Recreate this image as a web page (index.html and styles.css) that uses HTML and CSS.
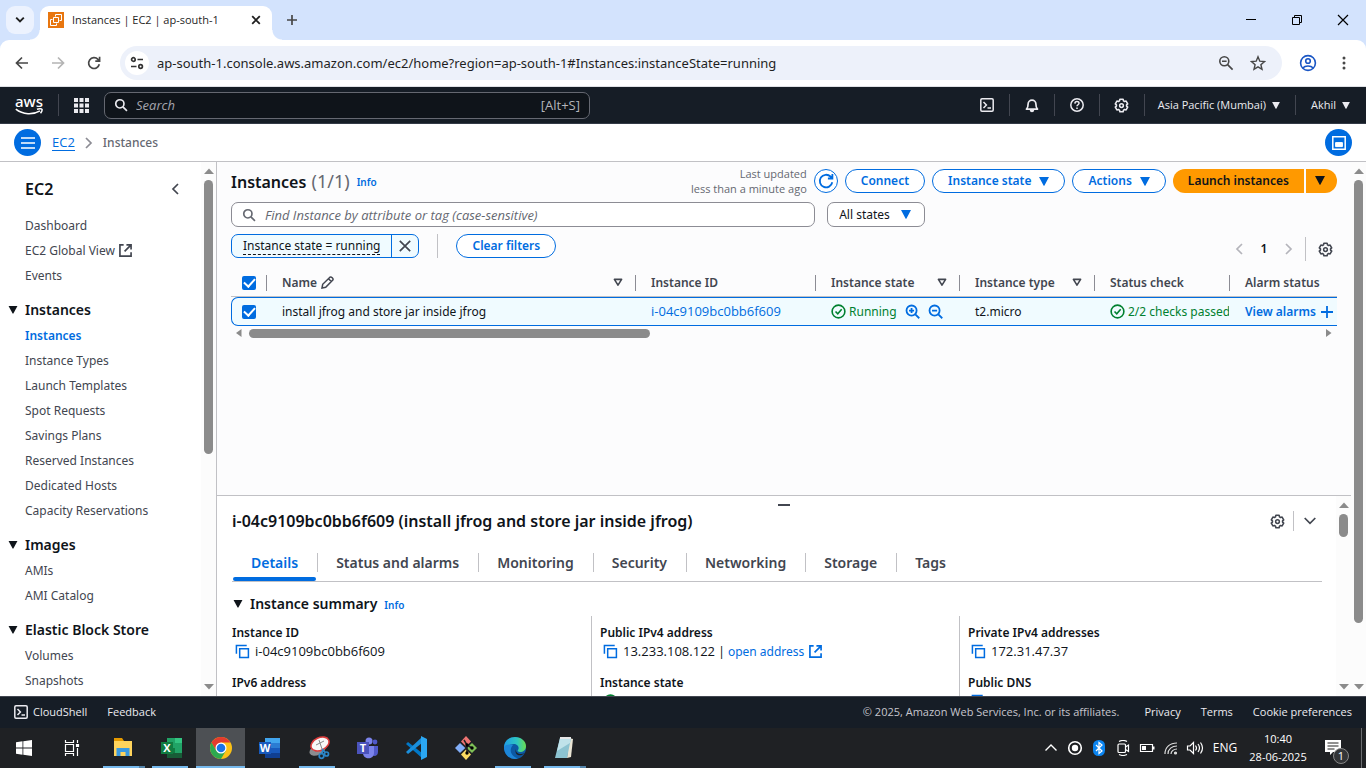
FILE: index.html
```html
<!DOCTYPE html>
<html lang="en">
<head>
<meta charset="utf-8">
<title>Instances | EC2 | ap-south-1</title>
<link rel="stylesheet" href="styles.css">
</head>
<body>
<svg class="defs" aria-hidden="true">
  <symbol id="caret" viewBox="0 0 10 9"><path d="M0 0h10L5.6 8.2a.7.7 0 0 1-1.200 0z" fill="currentColor"/></symbol>
  <symbol id="caret-open" viewBox="0 0 10 9"><path d="M1.400 1.400h7.200L5 7.200z" fill="none" stroke="currentColor" stroke-width="1.600" stroke-linejoin="round"/></symbol>
  <symbol id="gear" viewBox="0 0 16 16"><path d="M6.300 1.400h3.400l.5 1.700 1 .6 1.700-.4 1.700 2.900-1.200 1.200v1.200l1.200 1.200-1.700 2.900-1.700-.4-1 .6-.5 1.700H6.300l-.5-1.700-1-.6-1.700.4-1.700-2.900 1.200-1.200V7.400L1.400 6.200l1.700-2.900 1.700.4 1-.6z" fill="none" stroke="currentColor" stroke-width="1.700" stroke-linejoin="round"/><circle cx="8" cy="8" r="2" fill="none" stroke="currentColor" stroke-width="1.600"/></symbol>
  <symbol id="search" viewBox="0 0 16 16"><circle cx="6.700" cy="6.700" r="4.700" fill="none" stroke="currentColor" stroke-width="1.900"/><path d="M10.200 10.200l4.600 4.600" stroke="currentColor" stroke-width="1.900"/></symbol>
  <symbol id="external" viewBox="0 0 14 14"><path d="M5 1H1v12h12V9M8 1h5v5M13 1L6 8" fill="none" stroke="currentColor" stroke-width="1.800"/></symbol>
  <symbol id="copy" viewBox="0 0 16 16"><path d="M1.500 10.500v-9h11" fill="none" stroke="currentColor" stroke-width="1.600"/><path d="M5 5h9.300v9.300H5z" fill="none" stroke="currentColor" stroke-width="1.600"/></symbol>
  <symbol id="ok" viewBox="0 0 16 16"><circle cx="8" cy="8" r="6.800" fill="none" stroke="currentColor" stroke-width="1.700"/><path d="M4.800 8l2.400 2.500L11.400 5.600" fill="none" stroke="currentColor" stroke-width="1.700"/></symbol>
  <symbol id="zoom-in" viewBox="0 0 16 16"><circle cx="7" cy="7" r="5.400" fill="none" stroke="currentColor" stroke-width="1.900"/><path d="M11 11l4.200 4.200M4.300 7h5.400M7 4.300v5.400" stroke="currentColor" stroke-width="1.900"/></symbol>
  <symbol id="zoom-out" viewBox="0 0 16 16"><circle cx="7" cy="7" r="5.400" fill="none" stroke="currentColor" stroke-width="1.900"/><path d="M11 11l4.200 4.200M4.300 7h5.400" stroke="currentColor" stroke-width="1.900"/></symbol>
  <symbol id="shell" viewBox="0 0 14 14"><rect x=".8" y=".8" width="12.400" height="12.400" rx="1.200" fill="none" stroke="currentColor" stroke-width="1.500"/><path d="M3.500 4l2.900 3-2.900 3M7.500 10h3.500" fill="none" stroke="currentColor" stroke-width="1.500"/></symbol>
  <symbol id="left" viewBox="0 0 8 12"><path d="M7 1L2 6l5 5" fill="none" stroke="currentColor" stroke-width="1.700"/></symbol>
  <symbol id="right" viewBox="0 0 8 12"><path d="M1 1l5 5-5 5" fill="none" stroke="currentColor" stroke-width="1.700"/></symbol>
  <symbol id="up-tri" viewBox="0 0 10 6"><path d="M0 6l5-5.500L10 6z" fill="currentColor"/></symbol>
  <symbol id="down-tri" viewBox="0 0 10 6"><path d="M0 0h10L5 5.500z" fill="currentColor"/></symbol>
</svg>

<header class="browser">
  <div class="tabstrip">
    <button class="tab-search" aria-label="Search tabs"><svg width="10" height="8" viewBox="0 0 10 8"><path d="M1.200 1.700L5 5.500l3.800-3.800" fill="none" stroke="#1f1f1f" stroke-width="1.900"/></svg></button>
    <div class="tab">
      <svg class="favicon" width="16" height="16" viewBox="0 0 16 16"><path d="M0 0h16v16H0z" fill="#e8760f"/><g fill="none" stroke="#fff" stroke-width="1"><path d="M7.500 4.500v-2h6v6h-2M5.500 5.500h5v5h-5zM4.500 7.500h-2v6h6v-2"/></g></svg>
      <span class="tab-title">Instances | EC2 | ap-south-1</span>
      <button class="plain" aria-label="Close tab"><svg width="10" height="10" viewBox="0 0 10 10"><path d="M1.200 1.200l7.600 7.600M8.800 1.200L1.200 8.800" stroke="#1f1f1f" stroke-width="1.800"/></svg></button>
    </div>
    <button class="plain new-tab" aria-label="New tab"><svg width="12" height="12" viewBox="0 0 12 12"><path d="M6 1v10M1 6h10" stroke="#474747" stroke-width="1.700"/></svg></button>
    <div class="window-buttons">
      <button class="plain" aria-label="Minimize"><svg width="12" height="12" viewBox="0 0 12 12"><path d="M1 5.500h10" stroke="#000"/></svg></button>
      <button class="plain" aria-label="Restore"><svg width="12" height="12" viewBox="0 0 12 12"><path d="M1.500 3.500h7v7h-7zM3.500 3V1.500h7v7H9" fill="none" stroke="#000"/></svg></button>
      <button class="plain" aria-label="Close"><svg width="12" height="12" viewBox="0 0 12 12"><path d="M1 1l10 10M11 1L1 11" stroke="#000" stroke-width="1.200"/></svg></button>
    </div>
  </div>
  <div class="toolbar">
    <button class="plain tool" aria-label="Back"><svg width="14" height="14" viewBox="0 0 14 14"><path d="M13 7H2M7 1.500L1.500 7 7 12.500" fill="none" stroke="#474747" stroke-width="1.700"/></svg></button>
    <button class="plain tool" aria-label="Forward"><svg width="14" height="14" viewBox="0 0 14 14"><path d="M1 7h11M7 1.500L12.500 7 7 12.500" fill="none" stroke="#b4b4b4" stroke-width="1.700"/></svg></button>
    <button class="plain tool" aria-label="Reload"><svg width="14" height="14" viewBox="0 0 14 14"><path d="M12.300 8.300A5.400 5.400 0 1 1 11 3.400l1.400 1.400M12.600.8v4.300H8.300" fill="none" stroke="#474747" stroke-width="1.700"/></svg></button>
    <div class="omnibox">
      <span class="site-info"><svg width="14" height="14" viewBox="0 0 14 14" fill="none" stroke="#333" stroke-width="1.700"><circle cx="3.400" cy="3.500" r="1.800"/><path d="M7.500 3.500H13M1 10.500h5.500"/><circle cx="10.600" cy="10.500" r="1.800"/></svg></span>
      <input class="url" aria-label="Address" value="ap-south-1.console.aws.amazon.com/ec2/home?region=ap-south-1#Instances:instanceState=running">
      <button class="plain" aria-label="Zoom"><svg width="16" height="16" viewBox="0 0 16 16" fill="none" stroke="#474747" stroke-width="1.600"><circle cx="6.300" cy="6.300" r="4.500"/><path d="M9.600 9.600l5 5M4 6.300h4.600"/></svg></button>
      <button class="plain" aria-label="Bookmark"><svg width="16" height="16" viewBox="0 0 16 16"><path d="M8 1.800l1.800 4.400 4.700.4-3.600 3.100 1.100 4.600L8 11.800l-4 2.500 1.100-4.600L1.500 6.600l4.700-.4z" fill="none" stroke="#474747" stroke-width="1.400"/></svg></button>
    </div>
    <button class="plain profile" aria-label="Profile"><svg width="18" height="18" viewBox="0 0 18 18" fill="none" stroke="#1a56c4" stroke-width="1.600"><circle cx="9" cy="9" r="7.400"/><circle cx="9" cy="7" r="2.300"/><path d="M3.800 14c2.400-2.600 8-2.600 10.400 0"/></svg></button>
    <button class="plain" aria-label="Menu"><svg width="4" height="14" viewBox="0 0 4 14" fill="#474747"><circle cx="2" cy="2" r="1.500"/><circle cx="2" cy="7" r="1.500"/><circle cx="2" cy="12" r="1.500"/></svg></button>
  </div>
</header>

<nav class="aws-nav">
  <a class="aws-logo" href="#" aria-label="AWS home"><span>aws</span><svg width="28" height="7" viewBox="0 0 28 7" fill="none" stroke="#fff" stroke-width="1.500"><path d="M.8 1.200C8 6.800 18 7 25 2.800M22 1.300c1.500-.6 4.600-.8 5 0 .3.900-.5 2.700-1.500 4"/></svg></a>
  <button class="plain apps" aria-label="Services"><svg width="15" height="15" viewBox="0 0 15 15" fill="#ebebf0"><path d="M0 0h4v4H0zM5.500 0h4v4h-4zM11 0h4v4h-4zM0 5.500h4v4H0zM5.500 5.500h4v4h-4zM11 5.500h4v4h-4zM0 11h4v4H0zM5.500 11h4v4h-4zM11 11h4v4h-4z"/></svg></button>
  <label class="global-search"><svg width="14" height="14"><use href="#search"/></svg><input aria-label="Search" placeholder="Search"><span>[Alt+S]</span></label>
  <div class="nav-icons">
    <button class="plain" aria-label="CloudShell"><svg width="14" height="14"><use href="#shell"/></svg></button>
    <button class="plain" aria-label="Notifications"><svg width="14" height="15" viewBox="0 0 14 15"><path d="M1.500 11.200c1.600-1.600 1.600-3 1.600-5.200a3.900 3.900 0 0 1 7.800 0c0 2.200 0 3.600 1.600 5.200z" fill="none" stroke="currentColor" stroke-width="1.700" stroke-linejoin="round"/><path d="M4.800 12h4.400c0 3-4.400 3-4.400 0z" fill="currentColor"/></svg></button>
    <button class="plain" aria-label="Help"><svg width="14" height="14" viewBox="0 0 14 14" fill="none" stroke="currentColor" stroke-width="1.500"><circle cx="7" cy="7" r="6.200"/><path d="M4.900 5.600C5 2.800 9 2.900 9 5.300 9 6.800 7 6.700 7 8.300M7 9.500V11"/></svg></button>
    <button class="plain" aria-label="Settings"><svg width="15" height="15"><use href="#gear"/></svg></button>
  </div>
  <button class="plain region">Asia Pacific (Mumbai)<svg width="8" height="7"><use href="#caret"/></svg></button>
  <button class="plain account">Akhil<svg width="8" height="7"><use href="#caret"/></svg></button>
</nav>

<div class="crumb-bar">
  <button class="round" aria-label="Toggle navigation"><svg width="14" height="12" viewBox="0 0 14 12"><path d="M0 1h14M0 6h14M0 11h14" stroke="#fff" stroke-width="1.700"/></svg></button>
  <a class="crumb" href="#">EC2</a>
  <svg class="crumb-sep" width="8" height="12"><use href="#right"/></svg>
  <span class="crumb-current">Instances</span>
  <button class="round end" aria-label="Open panel"><svg width="14" height="14" viewBox="0 0 14 14" fill="none" stroke="#fff"><path d="M.8.800h12.400v12.400H.8z" stroke-width="1.500"/><path d="M3.600 6.600h6.800v4H3.600z" fill="#fff"/></svg></button>
</div>

<div class="workspace">
  <aside class="sidebar">
    <nav class="side-nav">
      <div class="side-title"><h2>EC2</h2><button class="plain" aria-label="Collapse"><svg width="8" height="12"><use href="#left"/></svg></button></div>
      <a href="#">Dashboard</a>
      <a href="#">EC2 Global View <svg width="13" height="13"><use href="#external"/></svg></a>
      <a href="#">Events</a>
      <h3><svg width="10" height="8"><use href="#caret"/></svg>Instances</h3>
      <a class="active" href="#">Instances</a>
      <a href="#">Instance Types</a>
      <a href="#">Launch Templates</a>
      <a href="#">Spot Requests</a>
      <a href="#">Savings Plans</a>
      <a href="#">Reserved Instances</a>
      <a href="#">Dedicated Hosts</a>
      <a href="#">Capacity Reservations</a>
      <h3><svg width="10" height="8"><use href="#caret"/></svg>Images</h3>
      <a href="#">AMIs</a>
      <a href="#">AMI Catalog</a>
      <h3><svg width="10" height="8"><use href="#caret"/></svg>Elastic Block Store</h3>
      <a href="#">Volumes</a>
      <a href="#">Snapshots</a>
    </nav>
    <div class="scrollbar side-scroll"><svg width="10" height="6"><use href="#up-tri"/></svg><i class="track"><b></b></i><svg width="10" height="6"><use href="#down-tri"/></svg></div>
  </aside>

  <div class="content">
    <main class="list">
      <div class="list-head">
        <h1>Instances <span>(1/1)</span></h1>
        <a class="info" href="#">Info</a>
        <p class="updated">Last updated<br>less than a minute ago</p>
        <button class="btn refresh" aria-label="Refresh"><svg width="16" height="16" viewBox="0 0 16 16"><path d="M14.300 9.300A6.300 6.300 0 1 1 12.500 3.500l1.700 1.700M14.400 1v4.500H9.900" fill="none" stroke="currentColor" stroke-width="1.800"/></svg></button>
        <button class="btn">Connect</button>
        <button class="btn">Instance state<svg width="10" height="9"><use href="#caret"/></svg></button>
        <button class="btn">Actions<svg width="10" height="9"><use href="#caret"/></svg></button>
        <div class="launch"><button>Launch instances</button><button aria-label="More launch options"><svg width="10" height="9"><use href="#caret"/></svg></button></div>
      </div>
      <div class="filter-row">
        <label class="find"><svg width="14" height="14"><use href="#search"/></svg><input aria-label="Find instance" placeholder="Find Instance by attribute or tag (case-sensitive)"></label>
        <span class="states"><select aria-label="State filter"><option>All states</option></select><svg width="10" height="9"><use href="#caret"/></svg></span>
      </div>
      <div class="chip-row">
        <div class="chip"><button class="chip-text"><span>Instance state = running</span></button><button class="chip-x" aria-label="Remove filter"><svg width="12" height="12" viewBox="0 0 12 12"><path d="M.800.800l10.400 10.400M11.200.800L.800 11.200" stroke="#424650" stroke-width="1.700"/></svg></button></div>
        <div class="rule"></div>
        <button class="btn">Clear filters</button>
        <div class="pager">
          <button class="plain faint" aria-label="Previous page"><svg width="8" height="12"><use href="#left"/></svg></button>
          <b>1</b>
          <button class="plain faint" aria-label="Next page"><svg width="8" height="12"><use href="#right"/></svg></button>
          <div class="rule"></div>
          <button class="plain" aria-label="Preferences"><svg width="15" height="15"><use href="#gear"/></svg></button>
        </div>
      </div>
      <table class="grid">
        <colgroup><col class="c-check"><col><col class="c-id"><col class="c-state"><col class="c-type"><col class="c-type"><col class="c-alarm"></colgroup>
        <thead><tr>
          <th><input type="checkbox" checked aria-label="Select all"></th>
          <th><div class="th">Name <svg width="13" height="13" viewBox="0 0 13 13"><path d="M1 12l.7-3.700L8.900 1.200c1.300-1 3.900 1.400 2.900 2.900L4.700 11.300zM7.500 2.700l2.800 2.800" fill="none" stroke="currentColor" stroke-width="1.500"/></svg><svg class="sort" width="10" height="9"><use href="#caret-open"/></svg></div></th>
          <th><div class="th">Instance ID</div></th>
          <th><div class="th">Instance state<svg class="sort" width="10" height="9"><use href="#caret-open"/></svg></div></th>
          <th><div class="th">Instance type<svg class="sort" width="10" height="9"><use href="#caret-open"/></svg></div></th>
          <th><div class="th">Status check</div></th>
          <th><div class="th">Alarm status</div></th>
        </tr></thead>
        <tbody><tr>
          <td><input type="checkbox" checked aria-label="Select instance"></td>
          <td>install jfrog and store jar inside jfrog</td>
          <td><a class="code" href="#">i-04c9109bc0bb6f609</a></td>
          <td><div class="state"><svg class="green" width="15" height="15"><use href="#ok"/></svg><span class="green">Running</span><button class="plain blue" aria-label="Include state"><svg width="15" height="15"><use href="#zoom-in"/></svg></button><button class="plain blue" aria-label="Exclude state"><svg width="15" height="15"><use href="#zoom-out"/></svg></button></div></td>
          <td>t2.micro</td>
          <td><div class="state green"><svg width="15" height="15"><use href="#ok"/></svg><span>2/2 checks passed</span></div></td>
          <td><a class="alarm" href="#">View alarms<svg width="12" height="12" viewBox="0 0 12 12"><path d="M6 0v12M0 6h12" stroke="currentColor" stroke-width="1.800"/></svg></a></td>
        </tr></tbody>
      </table>
      <div class="h-scroll"><svg width="6" height="8" viewBox="0 0 6 8"><path d="M5.500 0v8L0 4z" fill="#8b8b8b"/></svg><i><b></b></i><svg width="6" height="8" viewBox="0 0 6 8"><path d="M0 0v8l5.500-4z" fill="#8b8b8b"/></svg></div>
    </main>

    <section class="split">
      <div class="split-body">
        <div class="handle"></div>
        <div class="split-title">
          <h2>i-04c9109bc0bb6f609 (install jfrog and store jar inside jfrog)</h2>
          <button class="plain" aria-label="Panel preferences"><svg width="15" height="15"><use href="#gear"/></svg></button>
          <div class="rule"></div>
          <button class="plain" aria-label="Collapse panel"><svg width="12" height="8" viewBox="0 0 12 8"><path d="M.7 1L6 6.300 11.300 1" fill="none" stroke="currentColor" stroke-width="1.700"/></svg></button>
        </div>
        <div class="tabs" role="tablist">
          <button role="tab" aria-selected="true" class="on">Details</button>
          <button role="tab">Status and alarms</button>
          <button role="tab">Monitoring</button>
          <button role="tab">Security</button>
          <button role="tab">Networking</button>
          <button role="tab">Storage</button>
          <button role="tab">Tags</button>
        </div>
        <div class="summary-head"><svg width="10" height="8"><use href="#caret"/></svg><h3>Instance summary</h3><a class="info" href="#">Info</a></div>
        <div class="summary">
          <dl>
            <dt>Instance ID</dt><dd><svg class="blue" width="15" height="15"><use href="#copy"/></svg><span class="code">i-04c9109bc0bb6f609</span></dd>
            <dt>IPv6 address</dt><dd></dd>
          </dl>
          <dl>
            <dt>Public IPv4 address</dt><dd><svg class="blue" width="15" height="15"><use href="#copy"/></svg><span><span class="code">13.233.108.122</span> | <a href="#">open address</a></span><svg class="blue" width="13" height="13"><use href="#external"/></svg></dd>
            <dt>Instance state</dt><dd class="green"><svg width="15" height="15"><use href="#ok"/></svg></dd>
          </dl>
          <dl>
            <dt>Private IPv4 addresses</dt><dd><svg class="blue" width="15" height="15"><use href="#copy"/></svg><span class="code">172.31.47.37</span></dd>
            <dt>Public DNS</dt><dd><svg class="blue" width="15" height="15"><use href="#copy"/></svg></dd>
          </dl>
        </div>
      </div>
      <div class="scrollbar split-scroll"><svg width="10" height="6"><use href="#up-tri"/></svg><i class="track"><b></b></i><svg width="10" height="6"><use href="#down-tri"/></svg></div>
    </section>
  </div>
  <div class="scrollbar page-scroll"><svg width="10" height="6"><use href="#up-tri"/></svg><i class="track"><b></b></i><svg width="10" height="6"><use href="#down-tri"/></svg></div>
</div>

<footer class="aws-footer">
  <button class="plain"><svg width="14" height="14"><use href="#shell"/></svg>CloudShell</button>
  <a class="feedback" href="#">Feedback</a>
  <span class="copyright">© 2025, Amazon Web Services, Inc. or its affiliates.</span>
  <a href="#">Privacy</a><a href="#">Terms</a><a href="#">Cookie preferences</a>
</footer>

<div class="taskbar">
  <button class="cell sys" aria-label="Start"><svg width="16" height="16" viewBox="0 0 16 16" fill="#fff"><path d="M0 2.200L6.500 1.300v6.200H0zM7.300 1.200L16 0v7.500H7.300zM0 8.400h6.500v6.300L0 13.800zM7.300 8.400H16V16l-8.700-1.200z"/></svg></button>
  <button class="cell sys" aria-label="Task view"><svg width="16" height="16" viewBox="0 0 16 16" fill="none" stroke="#fff" stroke-width="1.200"><path d="M1.500 4.500h8v7h-8zM1.500 0v2.500h8V0M1.500 16v-2.500h8V16M13.500 0v3M13.500 8v8"/><path d="M12.500 4.500h2v2h-2z" fill="#fff"/></svg></button>
  <div class="apps-row">
  <button class="cell run split-run" aria-label="File Explorer"><svg width="22" height="20" viewBox="0 0 22 20"><path d="M2 0h8l2 3H2z" fill="#e59a00"/><path d="M2 3h18v15H2z" fill="#ffd45c"/><path d="M4.500 10h13v8h-4v-4h-5v4h-4z" fill="#3b9ae0"/></svg></button>
  <button class="cell run" aria-label="Excel"><svg width="22" height="22" viewBox="0 0 22 22"><path d="M6 1h15v20H6z" fill="#21a366"/><path d="M14 1h7v5h-7z" fill="#33c481"/><path d="M6 11h8v5H6z" fill="#107c41"/><path d="M6 16h15v5H6z" fill="#185c37"/><path d="M0 5h12v12H0z" fill="#107c41"/><text x="6" y="15" class="app-letter">X</text></svg></button>
  <button class="cell run wide current" aria-label="Chrome"><svg width="24" height="24" viewBox="0 0 24 24"><circle cx="12" cy="12" r="11" fill="#fbc116"/><path d="M2.500 6.500A11 11 0 0 1 21.500 6.500H12L7.200 14.700z" fill="#e33b2e"/><path d="M2.500 6.500A11 11 0 0 0 12 23l4.800-8.300-9.500 0z" fill="#2da94f"/><circle cx="12" cy="12" r="5.500" fill="#fff"/><circle cx="12" cy="12" r="4.300" fill="#1a73e8"/></svg></button>
  <button class="cell" aria-label="Word"><svg width="22" height="22" viewBox="0 0 22 22"><path d="M6 1h15v5H6z" fill="#41a5ee"/><path d="M6 6h15v5H6z" fill="#2b7cd3"/><path d="M6 11h15v5H6z" fill="#185abd"/><path d="M6 16h15v5H6z" fill="#103f91"/><path d="M0 5h12v12H0z" fill="#185abd"/><text x="6" y="15" class="app-letter">W</text></svg></button>
  <button class="cell run" aria-label="Snipping Tool"><svg width="22" height="24" viewBox="0 0 22 24"><ellipse cx="9.500" cy="14" rx="8.500" ry="5" fill="#8c8c90" transform="rotate(-25 9.500 14)"/><ellipse cx="12" cy="8" rx="9.500" ry="6.300" fill="#f7f7f7" stroke="#dc3c3c" stroke-width="1.600" transform="rotate(-25 12 8)"/><path d="M11 4l3 9M8 9l8-4" stroke="#888" fill="none"/><g fill="none" stroke="#2b86c9" stroke-width="1.700"><circle cx="13.500" cy="20" r="2.300"/><circle cx="18.500" cy="18" r="2"/><path d="M14 18l1-5M17 16l-3-3"/></g></svg></button>
  <button class="cell" aria-label="Teams"><svg width="22" height="22" viewBox="0 0 22 22"><circle cx="12" cy="4" r="3.500" fill="#7b83eb"/><circle cx="18" cy="5" r="2.400" fill="#5059c9"/><path d="M14 9h7v6c0 4-4 5-6 3z" fill="#5059c9"/><path d="M6 9h11v7c0 7-11 7-11 0z" fill="#7b83eb"/><path d="M0 5h12v12H0z" fill="#4b53bc"/><text x="6" y="15" class="app-letter">T</text></svg></button>
  <button class="cell" aria-label="Visual Studio Code"><svg width="22" height="24" viewBox="0 0 22 24"><path d="M0 8l2-2 14 11v5z" fill="#0078c8"/><path d="M0 16l2 2L16 7V1z" fill="#1a8fdc"/><path d="M15 0l6 3v18l-6 3z" fill="#2ba7f2"/></svg></button>
  <button class="cell" aria-label="Git"><svg width="22" height="24" viewBox="0 0 22 24"><path d="M11 0l5 5.500-5 5-5-5z" fill="#ef7472"/><path d="M5 7l5.300 5L5 17 0 12z" fill="#82aef8"/><path d="M17 7l5 5-5 5-5.300-5z" fill="#7fc157"/><path d="M11 13.500l5 5L11 24l-5-5.500z" fill="#fbdb62"/><path d="M9 4l3 5v9M12 9l5 3" fill="none" stroke="#222" stroke-width="1.500"/><circle cx="12" cy="9" r="1.700"/><circle cx="17" cy="12" r="1.700"/><circle cx="12" cy="17" r="1.700"/></svg></button>
  <button class="cell run" aria-label="Edge"><svg width="24" height="24" viewBox="0 0 24 24"><defs><linearGradient id="edge-top" x1="0" x2="1"><stop offset="0" stop-color="#1f9de8"/><stop offset=".6" stop-color="#2fc7c0"/><stop offset="1" stop-color="#6bdc50"/></linearGradient></defs><circle cx="12" cy="12" r="11" fill="#0c59a4"/><path d="M1 12C1 5 6 1 12 1s11 4 11 9c0 4-3 6-6 6-2 0-3-1-2-2 2-3-1-6-4-6-5 0-8 3-8 8z" fill="url(#edge-top)"/><path d="M1 11c0 7 5 12 11 12 1 0 2 0 3-.4C7 20 6 13 10 9 5 8 2 9 1 11z" fill="#1d86d8"/><path d="M22 17c-4 2-10 1-9-4-2 5 3 9 9 4z" fill="#1f2124"/></svg></button>
  <button class="cell run split-run" aria-label="Notepad"><svg width="20" height="22" viewBox="0 0 20 22"><path d="M15 1l4 1-2 18-4 1z" fill="#e9e4d4"/><path d="M6 1h11l-4 20H1z" fill="#8cc3d1"/><path d="M6 1h11l-1 5L3 14z" fill="#bfe2ea"/><path d="M6 1h11" stroke="#e6e6e6" stroke-width="2"/></svg></button>
  </div>
  <div class="tray">
    <svg width="24" height="16" viewBox="0 0 24 16"><path d="M6.500 10.500L12 5l5.500 5.500" fill="none" stroke="#fff" stroke-width="1.400"/></svg>
    <svg width="24" height="16" viewBox="0 0 24 16"><circle cx="12" cy="8" r="6.300" fill="none" stroke="#fff" stroke-width="1.600"/><circle cx="12" cy="8" r="3.200" fill="#fff"/></svg>
    <svg width="24" height="16" viewBox="0 0 24 16"><rect x="6" width="12" height="16" rx="5.500" fill="#0a84f0"/><path d="M9 5l6 6-3 2.500V2.500L15 5l-6 6" fill="none" stroke="#fff" stroke-width="1.200"/></svg>
    <svg width="24" height="16" viewBox="0 0 24 16" fill="none" stroke="#fff" stroke-width="1.200"><rect x="7" y="4" width="7.500" height="8.500" rx="1"/><path d="M14.500 7l3-2v6.500l-3-2M8 1.500q4-2 8 0M8 14.500q4 2 8 0"/></svg>
    <svg width="24" height="16" viewBox="0 0 24 16"><path d="M5.500 4.500h12v7h-12z" fill="none" stroke="#fff" stroke-width="1.200"/><path d="M7 6h4v4H7zM18 6.500h1.500v3H18z" fill="#fff"/></svg>
    <svg width="24" height="16" viewBox="0 0 24 16" fill="none" stroke="#ddd" stroke-width="1.200"><path d="M6 14C6 7 11 3 18 3M9 14c0-5 4-8 9-8M12 14c0-3 3-5 6-5"/><circle cx="16.500" cy="13" r="1" fill="#ddd"/></svg>
    <svg width="24" height="16" viewBox="0 0 24 16" fill="none" stroke="#fff" stroke-width="1.200"><path d="M4.500 6h2.500l3.500-3.500v11L7 10H4.500zM12.500 5.500q2 2.500 0 5M15 4q3 4 0 8M17.500 2.500q4 5.500 0 11"/></svg>
    <span class="lang">ENG</span>
    <span class="clock">10:40<br>28-06-2025</span>
    <button class="plain notice" aria-label="Notifications"><svg width="18" height="18" viewBox="0 0 18 18"><path d="M1 1h16v12H9l-3 3v-3H1z" fill="#fff"/><path d="M3.500 4h11M3.500 7h11M3.500 10h7" stroke="#222"/></svg><span class="count">1</span></button>
  </div>
</div>
</body>
</html>
```
FILE: styles.css
```css
* { box-sizing: border-box; }

:root {
  --blue: #006ce0;
  --ink: #0f141a;
  --muted: #656871;
  --body: #424650;
  --line: #c1c1c5;
  --dark: #161d26;
  --green: #00802f;
  --strong: 600 12px/16px "Noto Sans", sans-serif;
  --wide: 13px/18px "Open Sans", sans-serif;
}

body {
  margin: 0;
  height: 100vh;
  display: flex;
  flex-direction: column;
  overflow: hidden;
  font: 12px/18px "Noto Sans", "Open Sans", sans-serif;
  color: var(--ink);
  background: #fff;
}

h1, h2, h3, p, dl, dd { margin: 0; }
a { color: var(--blue); text-decoration: none; }
svg { flex: none; }
button, input, select { font: inherit; color: inherit; }
button { white-space: nowrap; }
.defs { position: absolute; width: 0; height: 0; }
.plain {
  border: 0;
  padding: 0;
  background: none;
  display: inline-flex;
  align-items: center;
  justify-content: center;
}
.blue { color: var(--blue); }
.green { color: var(--green); }
.code { font: var(--wide); }
.rule { width: 1px; height: 24px; background: var(--line); }

/* Browser chrome */
.browser { flex: none; background: #d3e3fd; }
.tabstrip { display: flex; align-items: center; height: 40px; padding: 6px 6px 0; }
.tab-search {
  width: 28px;
  height: 28px;
  margin: 0 6px 6px 0;
  padding: 0;
  border: 0;
  border-radius: 9px;
  background: #ecf2fe;
}
.tab {
  position: relative;
  display: flex;
  align-items: center;
  gap: 8px;
  width: 232px;
  height: 34px;
  padding: 0 11px 6px 8px;
  border-radius: 9px 9px 0 0;
  background: #fff;
  font: 11px/16px "Open Sans", sans-serif;
  color: #1f1f1f;
}
.tab::before, .tab::after {
  content: "";
  position: absolute;
  bottom: 0;
  width: 10px;
  height: 10px;
}
.tab::before { left: -10px; background: radial-gradient(circle at 0 0, transparent 9px, #fff 10px); }
.tab::after { right: -10px; background: radial-gradient(circle at 100% 0, transparent 9px, #fff 10px); }
.tab-title { flex: 1; }
.new-tab { margin: 0 0 6px 14px; }
.window-buttons { display: flex; gap: 34px; margin: 0 11px 6px auto; }
.toolbar {
  display: flex;
  align-items: center;
  height: 47px;
  padding: 0 20px 0 15px;
  gap: 19px;
  border-bottom: 1px solid #dfe1e5;
  border-radius: 9px 9px 0 0;
  background: #fff;
}
.tool { width: 14px; margin-right: 3px; }
.profile { margin-right: 6px; }
.omnibox {
  flex: 1;
  display: flex;
  align-items: center;
  gap: 16px;
  height: 34px;
  margin: 0 -2px 0 -3px;
  padding: 0 16px 0 5px;
  border-radius: 17px;
  background: #edf1fa;
}
.site-info {
  display: flex;
  align-items: center;
  justify-content: center;
  width: 24px;
  height: 24px;
  margin-right: -8px;
  border-radius: 12px;
  background: #fff;
}
.url { flex: 1; padding: 0; border: 0; background: none; font-size: 13px; color: #1f1f1f; }

/* AWS top navigation */
.aws-nav {
  flex: none;
  display: flex;
  align-items: center;
  height: 37px;
  border-bottom: 1px solid #333a46;
  background: var(--dark);
  color: #ebebf0;
}
.aws-logo {
  display: flex;
  flex-direction: column;
  width: 59px;
  height: 22px;
  padding-left: 15px;
  border-right: 1px solid #424650;
  font: 500 15px/14px "Noto Sans", sans-serif;
  color: #fff;
}
.apps { width: 45px; }
.global-search {
  display: flex;
  align-items: center;
  width: 486px;
  height: 27px;
  padding: 0 9px;
  border: 1px solid #656871;
  border-radius: 7px;
  background: #0f141a;
}
.global-search input { flex: 1; padding: 0 0 0 8px; border: 0; background: none; outline: 0; font: var(--wide); }
.global-search input::placeholder { color: #a4a4ad; font-style: italic; }
.global-search span { font: var(--wide); color: #b4b4bb; }
.nav-icons { display: flex; margin-left: auto; }
.nav-icons button { width: 45px; height: 22px; border-right: 1px solid #424650; }
.region, .account { gap: 6px; height: 20px; padding: 0 16px 0 15px; font: 500 11px/16px "Open Sans", sans-serif; }
.region { padding-right: 15px; padding-left: 13px; border-right: 1px solid #424650; }

/* Breadcrumbs */
.crumb-bar {
  flex: none;
  display: flex;
  align-items: center;
  height: 38px;
  padding: 0 14px;
  border-bottom: 1px solid var(--line);
}
.round {
  display: flex;
  align-items: center;
  justify-content: center;
  width: 27px;
  height: 27px;
  padding: 0;
  border: 0;
  border-radius: 50%;
  background: var(--blue);
}
.round.end { margin-left: auto; }
.crumb { margin-left: 11px; font: var(--wide); line-height: 16px; border-bottom: 1px solid var(--blue); }
.crumb-sep { margin: 0 10px; color: #8c8c94; }
.crumb-current { font-weight: 500; line-height: 16px; color: var(--muted); }

/* Body layout */
.workspace { flex: 1; min-height: 0; display: flex; }
.sidebar { flex: none; display: flex; width: 217px; border-right: 1px solid var(--line); overflow: hidden; }
.side-nav { flex: 1; display: flex; flex-direction: column; padding: 15px 0 0 25px; }
.side-title { display: flex; align-items: center; justify-content: space-between; height: 24px; margin-bottom: 12px; padding-right: 22px; }
.side-title h2 { font-size: 16px; font-weight: 600; }
.side-title button { color: var(--body); }
.side-nav a { display: flex; flex: none; align-items: center; gap: 4px; height: 25px; color: var(--body); }
.side-nav a.active { color: var(--blue); font: var(--strong); }
.side-nav h3 {
  display: flex;
  flex: none;
  align-items: center;
  gap: 7px;
  height: 26px;
  margin: 9px 0 0 -17px;
  font-size: 14px;
  font-weight: 600;
}
.scrollbar {
  flex: none;
  display: flex;
  flex-direction: column;
  align-items: center;
  width: 15px;
  padding: 6px 0;
  gap: 6px;
  background: #fcfcfc;
  color: #8b8b8b;
}
.track { flex: 1; width: 9px; }
.track b { display: block; width: 9px; border-radius: 5px; background: #8b8b8b; }
.side-scroll .track b { height: 55%; }
.page-scroll .track b { height: 89%; }
.split-scroll .track b { height: 14%; min-height: 22px; }

.content { flex: 1; min-width: 0; display: flex; flex-direction: column; }
.list { flex: 1; min-height: 0; padding: 7px 14px 0 14px; background: #fcfcfd; }
.list-head { display: flex; align-items: center; height: 24px; gap: 7px; }
.list-head h1 { font-size: 16px; line-height: 22px; font-weight: 600; }
.list-head h1 span { margin-left: 1px; font-size: 18px; font-weight: 400; color: var(--muted); }
.info { font: 600 10px/14px "Noto Sans", sans-serif; padding-top: 2px; }
.updated { margin-left: auto; font: 11px/15px "Open Sans", sans-serif; text-align: right; color: var(--muted); }
.btn {
  display: inline-flex;
  align-items: center;
  gap: 8px;
  height: 24px;
  padding: 0 15px;
  border: 1px solid var(--blue);
  border-radius: 12px;
  background: #fff;
  color: var(--blue);
  font: var(--strong);
}
.refresh { width: 24px; padding: 0; justify-content: center; }
.launch { display: flex; gap: 2px; }
.launch button {
  height: 24px;
  padding: 0 15px;
  border: 0;
  border-radius: 12px 0 0 12px;
  background: #ff9900;
  font: var(--strong);
}
.launch button + button { padding: 0 12px 0 9px; border-radius: 0 12px 12px 0; }

.filter-row { display: flex; gap: 12px; margin-top: 9px; }
.find, .states { display: flex; align-items: center; height: 25px; border: 1px solid #8c8c94; border-radius: 7px; background: #fff; }
.find { flex: none; width: calc(53% - 2px); padding: 0 10px; color: var(--muted); }
.find input { flex: 1; padding: 0 0 0 9px; border: 0; outline: 0; background: none; font: var(--wide); }
.find input::placeholder { color: var(--muted); font-style: italic; }
.states { position: relative; }
.states select { width: 96px; height: 23px; padding: 0 11px; border: 0; appearance: none; background: none; }
.states svg { position: absolute; right: 13px; color: var(--blue); pointer-events: none; }

.chip-row { display: flex; align-items: center; height: 24px; margin-top: 7px; }
.chip { display: flex; height: 24px; border: 1px solid var(--blue); border-radius: 7px; background: #f0fbff; overflow: hidden; }
.chip button { padding: 0 11px; border: 0; background: none; }
.chip-text span { border-bottom: 1px dashed var(--ink); line-height: 16px; display: block; }
.chip .chip-x { display: flex; align-items: center; padding: 0 7px; border-left: 1px solid var(--blue); }
.chip-row > .rule { margin: 0 18px; }
.pager { display: flex; align-items: center; margin: 6px 4px 0 auto; color: var(--body); }
.pager b { width: 42px; text-align: center; font: var(--strong); color: var(--ink); }
.pager .rule { margin: 0 12px; }
.pager .faint { color: #b4b4bb; }

/* Instances table */
.grid { width: 100%; margin-top: 11px; table-layout: fixed; border-collapse: separate; border-spacing: 0; text-align: left; }
.c-check { width: 35px; }
.c-id { width: 180px; }
.c-state { width: 144px; }
.c-type { width: 135px; }
.c-alarm { width: 108px; }
.grid th { height: 28px; padding: 0; border-bottom: 1px solid var(--line); font: var(--strong); color: var(--body); }
.grid td { height: 29px; padding: 0 0 0 16px; border: solid var(--blue); border-width: 1px 0; background: #f0fbff; white-space: nowrap; overflow: hidden; }
.grid td:first-child { padding-left: 10px; border-left-width: 1px; border-radius: 7px 0 0 7px; }
.grid th:first-child { padding-left: 11px; }
.th { display: flex; align-items: center; gap: 4px; height: 16px; padding: 0 12px 0 15px; border-left: 1px solid #8c8c94; white-space: nowrap; }
.sort { margin-left: auto; }
.grid input, .grid td, .grid th { vertical-align: middle; }
.grid input {
  appearance: none;
  display: grid;
  place-items: center;
  width: 14px;
  height: 14px;
  margin: 0;
  border-radius: 2px;
  background: var(--blue);
}
.grid input::before {
  content: "";
  width: 5px;
  height: 9px;
  margin-bottom: 2px;
  border: solid #fff;
  border-width: 0 2px 2px 0;
  transform: rotate(42deg);
}
.state { display: flex; align-items: center; gap: 3px; overflow: hidden; }
.state button { margin-left: 5px; }
.alarm { display: flex; align-items: center; gap: 5px; font: var(--strong); }
.h-scroll { display: flex; align-items: center; gap: 7px; margin-top: 2px; padding: 0 5px; height: 10px; }
.h-scroll i { flex: 1; }
.h-scroll b { display: block; width: 37.5%; height: 9px; border-radius: 5px; background: #8b8b8b; }

/* Split panel */
.split { flex: none; display: flex; height: 201px; border-top: 1px solid var(--line); background: #fff; overflow: hidden; }
.split-body { flex: 1; min-width: 0; padding: 8px 14px 0 15px; }
.handle { width: 12px; height: 2px; margin: 0 calc(50% - 13px) 0 auto; background: var(--body); }
.split-title { display: flex; align-items: center; gap: 8px; height: 28px; margin-top: 1px; padding-right: 6px; color: var(--body); }
.split-title .rule { height: 20px; }
.split-title h2 { flex: 1; font-size: 16px; font-weight: 600; color: var(--ink); }
.split-title .plain:last-child { margin-left: 2px; }
.tabs { display: flex; height: 38px; margin-top: 9px; border-bottom: 1px solid var(--line); }
.tabs button {
  position: relative;
  height: 37px;
  padding: 0 19px;
  border: 0;
  background: none;
  font: 600 14px/18px "Noto Sans", sans-serif;
  color: var(--body);
}
.tabs button + button::before { content: ""; position: absolute; left: 0; top: 9px; width: 1px; height: 19px; background: var(--line); }
.tabs .on { color: var(--blue); }
.tabs .on::after { content: ""; position: absolute; left: 1px; right: 1px; bottom: 0; height: 4px; border-radius: 2px; background: var(--blue); }
.summary-head { display: flex; align-items: center; gap: 7px; height: 20px; margin: 12px 0 2px 1px; }
.summary-head h3 { font-size: 14px; font-weight: 600; }
.summary { display: grid; grid-template-columns: repeat(3, 1fr); margin: 0 -5px 0 -9px; }
.summary dl { padding: 8px 0 14px 9px; }
.summary dl + dl { padding-left: 8px; border-left: 1px solid var(--line); }
.summary dt { font: var(--strong); line-height: 18px; }
.summary dd { display: flex; align-items: center; gap: 5px; height: 18px; margin-bottom: 14px; padding-left: 3px; white-space: nowrap; }

/* Footer */
.aws-footer {
  flex: none;
  display: flex;
  align-items: center;
  height: 32px;
  padding: 0 14px 2px;
  border-top: 1px solid #424650;
  background: var(--dark);
  color: #ebebf0;
  font: 11px/16px "Open Sans", sans-serif;
}
.aws-footer .plain { gap: 5px; font-weight: 500; }
.aws-footer a { margin-left: 20px; font-weight: 500; color: #ebebf0; }
.copyright { margin: 0 5px 0 auto; color: #c6c6cd; }

/* Windows taskbar */
.taskbar { flex: none; display: flex; align-items: center; height: 40px; background: #1f2124; color: #fff; font: 12px/18px "Open Sans", sans-serif; }
.cell { position: relative; display: flex; align-items: center; justify-content: center; width: 49px; height: 40px; padding: 0; border: 0; background: none; }
.cell.sys { width: 48px; }
.apps-row { display: flex; margin-left: 2px; }
.current { background: #4d5054; }
.run::after { content: ""; position: absolute; left: 5px; right: 8px; bottom: 0; height: 2px; background: #76b9ed; }
.wide::after { left: 0; right: 0; }
.split-run::after { right: 2px; background: linear-gradient(90deg, #76b9ed 86%, #5585ab 86%); }
.app-letter { font: 700 11px "Open Sans", sans-serif; fill: #fff; text-anchor: middle; }
.tray { display: flex; align-items: center; margin-left: auto; padding-right: 4px; }
.lang { width: 36px; text-align: center; }
.clock { width: 70px; font-size: 11px; text-align: center; }
.notice { position: relative; width: 49px; height: 40px; padding-right: 8px; border-right: 1px solid #6b6d70; }
.count { position: absolute; right: 12px; bottom: 4px; width: 16px; height: 16px; border: 1px solid #888; border-radius: 50%; background: #333538; color: #fff; font-size: 11px; line-height: 14px; text-align: center; }
```
